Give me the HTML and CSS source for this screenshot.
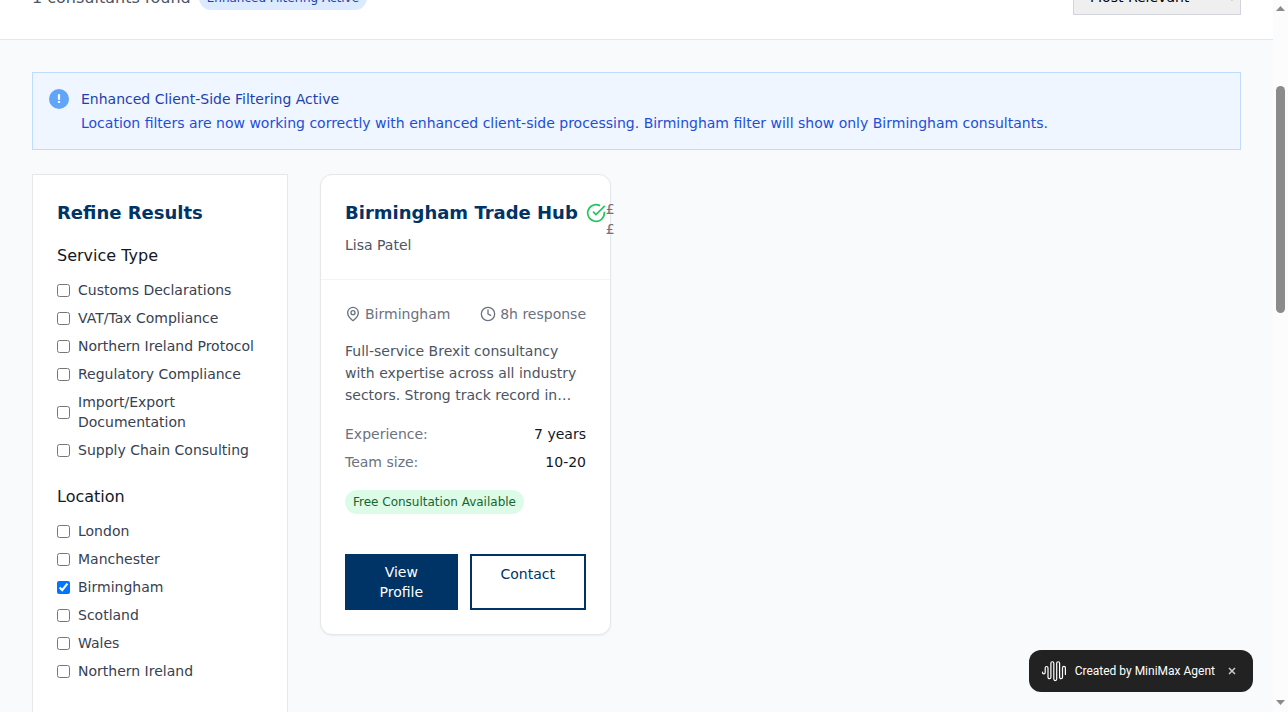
FILE: index.html
```html
<!DOCTYPE html>
<html lang="en">
<head>
<meta charset="utf-8">
<meta name="viewport" content="width=device-width, initial-scale=1">
<title>Find consultants</title>
<link rel="stylesheet" href="styles.css">
</head>
<body>
<div class="viewport">
  <div class="page">
    <header class="results-bar">
      <div class="results-count">
        <span>1 consultants found</span>
        <span class="pill pill-blue">Enhanced Filtering Active</span>
      </div>
      <select class="sort" aria-label="Sort results">
        <option>Most Relevant</option>
        <option>Highest Rated</option>
      </select>
    </header>

    <main class="content">
      <section class="notice">
        <svg class="notice-icon" viewBox="0 0 20 20" aria-hidden="true">
          <circle cx="10" cy="10" r="10" fill="#60a5fa"/>
          <path d="M8.9 5.2h2.2v5.6H8.9zM8.9 12h2.2v2H8.9z" fill="#fff"/>
        </svg>
        <div class="notice-text">
          <p class="notice-title">Enhanced Client-Side Filtering Active</p>
          <p>Location filters are now working correctly with enhanced client-side processing. Birmingham filter will show only Birmingham consultants.</p>
        </div>
      </section>

      <div class="columns">
        <aside class="filters">
          <h2 class="heading">Refine Results</h2>
          <fieldset class="filter-group">
            <legend>Service Type</legend>
            <div class="options">
              <label><input type="checkbox"><span>Customs Declarations</span></label>
              <label><input type="checkbox"><span>VAT/Tax Compliance</span></label>
              <label><input type="checkbox"><span>Northern Ireland Protocol</span></label>
              <label><input type="checkbox"><span>Regulatory Compliance</span></label>
              <label><input type="checkbox"><span>Import/Export Documentation</span></label>
              <label><input type="checkbox"><span>Supply Chain Consulting</span></label>
            </div>
          </fieldset>
          <fieldset class="filter-group">
            <legend>Location</legend>
            <div class="options">
              <label><input type="checkbox"><span>London</span></label>
              <label><input type="checkbox"><span>Manchester</span></label>
              <label><input type="checkbox" checked><span>Birmingham</span></label>
              <label><input type="checkbox"><span>Scotland</span></label>
              <label><input type="checkbox"><span>Wales</span></label>
              <label><input type="checkbox"><span>Northern Ireland</span></label>
            </div>
          </fieldset>
        </aside>

        <section class="results">
          <article class="card">
            <div class="card-head">
              <div>
                <div class="card-title">
                  <h3 class="heading">Birmingham Trade Hub</h3>
                  <svg class="verified" viewBox="0 0 24 24" aria-hidden="true"><path d="M22 11.08V12a10 10 0 1 1-5.93-9.14"/><path d="m9 11 3 3L22 4"/></svg>
                </div>
                <p class="card-person">Lisa Patel</p>
              </div>
              <span class="price">£ £</span>
            </div>
            <div class="card-body">
              <div class="meta">
                <span class="meta-item"><svg viewBox="0 0 24 24" aria-hidden="true"><path d="M20 10c0 6-8 12-8 12s-8-6-8-12a8 8 0 0 1 16 0Z"/><circle cx="12" cy="10" r="3"/></svg>Birmingham</span>
                <span class="meta-item"><svg viewBox="0 0 24 24" aria-hidden="true"><circle cx="12" cy="12" r="10"/><path d="M12 6v6l4 2"/></svg>8h response</span>
              </div>
              <p class="description">Full-service Brexit consultancy with expertise across all industry sectors. Strong track record in…</p>
              <dl class="facts">
                <div><dt>Experience:</dt><dd>7 years</dd></div>
                <div><dt>Team size:</dt><dd>10-20</dd></div>
              </dl>
              <span class="pill pill-green">Free Consultation Available</span>
              <div class="actions">
                <a class="btn btn-primary" href="#profile">View Profile</a>
                <a class="btn btn-outline" href="#contact">Contact</a>
              </div>
            </div>
          </article>
        </section>
      </div>
    </main>
  </div>

  <div class="scrollbar" aria-hidden="true">
    <svg viewBox="0 0 9 5"><path d="M0 5 4.500 0 9 5z"/></svg>
    <div class="track"><div class="thumb"></div></div>
    <svg viewBox="0 0 9 5"><path d="M0 0h9L4.500 5z"/></svg>
  </div>
</div>

<div class="toast">
  <svg class="toast-logo" viewBox="0 0 26 22" aria-hidden="true"><path d="M1.500 12v.6a1.300 1.300 0 0 0 2.700 0V7.900a1.400 1.400 0 0 1 2.800 0v9.300a1.400 1.400 0 0 0 2.900 0V3.200a1.400 1.400 0 0 1 2.900 0v15.900a1.400 1.400 0 0 0 2.900 0V3.200a1.400 1.400 0 0 1 2.900 0v14a1.400 1.400 0 0 0 2.900 0V7.900a1.400 1.400 0 0 1 2.900 0v6.500"/></svg>
  <span>Created by MiniMax Agent</span>
  <button class="toast-close" type="button" aria-label="Dismiss"><svg viewBox="0 0 8 8" aria-hidden="true"><path d="m1 1 6 6M7 1 1 7"/></svg></button>
</div>
</body>
</html>
```

FILE: styles.css
```css
*,
*::before,
*::after {
  box-sizing: border-box;
}

body,
p,
h2,
h3,
dl,
dd {
  margin: 0;
}

body {
  background: #f9fafb;
  color: #111827;
  font-family: "DejaVu Sans", sans-serif;
  font-size: 14px;
  line-height: 20px;
}

.viewport {
  display: flex;
  height: 100vh;
  overflow: hidden;
}

.page {
  flex: 1;
  min-width: 0;
}

/* Results bar, scrolled partly out of view */
.results-bar {
  display: flex;
  justify-content: space-between;
  align-items: flex-end;
  height: 40px;
  padding: 0 32px 24px;
  background: #fff;
  border-bottom: 1px solid #e5e7eb;
}

.results-count {
  display: flex;
  align-items: center;
  gap: 8px;
  padding-bottom: 5px;
  color: #4b5563;
  font-size: 16px;
}

.sort {
  flex-shrink: 0;
  width: 168px;
  height: 36px;
  padding: 8px 12px;
  background: #efefef;
  border: 1px solid #d1d5db;
  border-radius: 0;
  color: #000;
  font: inherit;
}

.pill {
  padding: 4px 8px;
  border-radius: 12px;
  font-size: 12px;
  line-height: 16px;
}

.pill-blue {
  background: #dbeafe;
  color: #1e40af;
}

.pill-green {
  align-self: flex-start;
  background: #dcfce7;
  color: #166534;
}

.content {
  padding: 32px;
}

.notice {
  display: flex;
  gap: 12px;
  margin-bottom: 24px;
  padding: 16px;
  background: #eff6ff;
  border: 1px solid #bfdbfe;
  color: #1d4ed8;
}

.notice-icon {
  flex-shrink: 0;
  width: 20px;
  height: 20px;
}

.notice-text {
  display: grid;
  gap: 4px;
}

.notice-title {
  color: #1e40af;
}

.columns {
  display: grid;
  grid-template-columns: 256px minmax(0, 1fr);
  gap: 32px;
}

.heading {
  color: #003366;
  font-size: 18px;
  font-weight: 700;
  line-height: 28px;
}

/* Filters */
.filters {
  padding: 24px;
  background: #fff;
  border: 1px solid #e5e7eb;
}

.filters .heading {
  margin-bottom: 16px;
}

.filter-group {
  min-width: 0;
  margin: 0 0 24px;
  padding: 0;
  border: 0;
}

.filter-group legend {
  margin-bottom: 12px;
  padding: 0;
  font-size: 16px;
  line-height: 25px;
}

.options {
  display: grid;
  gap: 8px;
}

.options label {
  display: flex;
  align-items: center;
  gap: 8px;
  color: #374151;
}

.options input {
  flex-shrink: 0;
  width: 13px;
  height: 13px;
  margin: 0;
}

/* Result cards */
.results {
  display: grid;
  grid-template-columns: repeat(3, minmax(0, 1fr));
  gap: 24px;
  align-items: start;
}

.card {
  background: #fff;
  border: 1px solid #e5e7eb;
  border-radius: 12px;
  box-shadow: 0 1px 2px rgba(0, 0, 0, 0.06);
}

.card-head {
  display: flex;
  justify-content: space-between;
  padding: 24px;
  border-bottom: 1px solid #f3f4f6;
}

.card-title {
  display: flex;
  align-items: center;
  gap: 8px;
  margin-bottom: 8px;
  white-space: nowrap;
}

.card svg {
  flex-shrink: 0;
  width: 16px;
  height: 16px;
  fill: none;
  stroke: currentColor;
  stroke-width: 2;
  stroke-linecap: round;
  stroke-linejoin: round;
}

.card .verified {
  width: 20px;
  height: 20px;
  color: #22c55e;
}

.card-person,
.description {
  color: #4b5563;
}

.price {
  color: #6b7280;
}

.card-body {
  display: flex;
  flex-direction: column;
  padding: 24px;
}

.meta {
  display: flex;
  justify-content: space-between;
  margin-bottom: 16px;
  color: #6b7280;
}

.meta-item {
  display: flex;
  align-items: center;
  gap: 4px;
}

.description {
  margin-bottom: 18px;
  line-height: 22px;
}

.facts {
  display: grid;
  gap: 8px;
  margin-bottom: 18px;
}

.facts div {
  display: flex;
  justify-content: space-between;
}

.facts dt {
  color: #6b7280;
}

.actions {
  display: flex;
  gap: 12px;
  margin-top: 40px;
}

.btn {
  flex: 1;
  padding: 8px 16px;
  text-align: center;
  text-decoration: none;
}

.btn-primary {
  background: #003366;
  color: #fff;
}

.btn-outline {
  border: 2px solid #003366;
  color: #003366;
}

/* Scrollbar */
.scrollbar {
  display: flex;
  flex-direction: column;
  align-items: center;
  flex: 0 0 15px;
  padding: 6px 0 7px;
  background: #fcfcfc;
}

.scrollbar svg {
  width: 9px;
  height: 5px;
  fill: #8b8b8b;
}

.track {
  flex: 1;
  padding-top: 75px;
}

.thumb {
  width: 9px;
  height: 227px;
  background: #8b8b8b;
  border-radius: 5px;
}

/* Floating credit */
.toast {
  position: fixed;
  right: 35px;
  bottom: 20px;
  display: flex;
  align-items: center;
  height: 42px;
  padding: 0 17px 0 12px;
  background: #222;
  border-radius: 12px;
  color: #fff;
  font-family: Roboto, sans-serif;
  font-size: 12px;
  font-weight: 400;
}

.toast-logo {
  width: 26px;
  height: 22px;
  margin-right: 8px;
  fill: none;
  stroke: #fff;
  stroke-width: 1.2;
  stroke-linecap: round;
}

.toast-close {
  display: flex;
  margin-left: 13px;
  padding: 0;
  background: none;
  border: 0;
  color: #ccc;
}

.toast-close svg {
  width: 8px;
  height: 8px;
  stroke: currentColor;
  stroke-width: 1.5;
}
```
